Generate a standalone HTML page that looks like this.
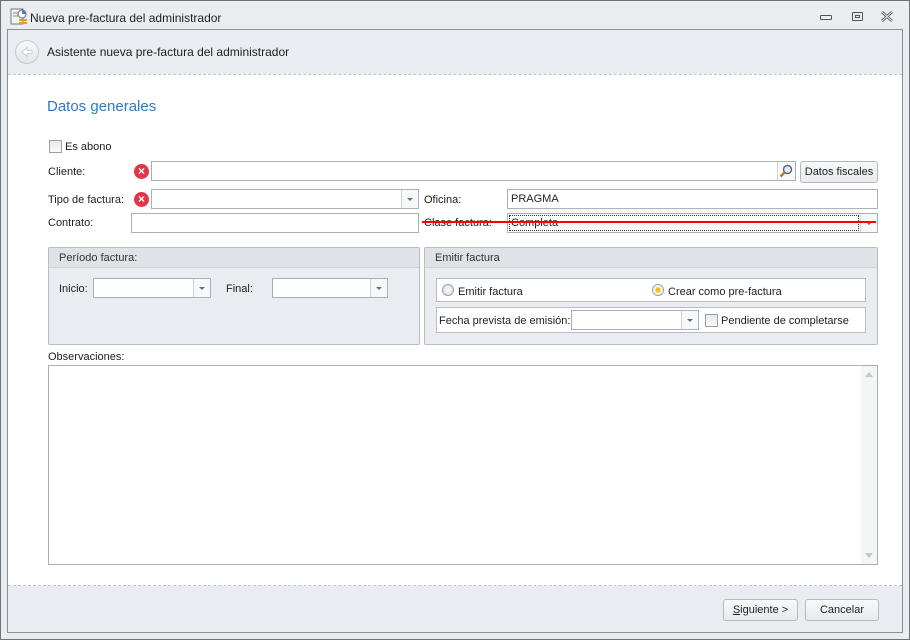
<!DOCTYPE html>
<html><head><meta charset="utf-8">
<style>
*{box-sizing:border-box;margin:0;padding:0}
body{width:910px;height:640px;position:relative;overflow:hidden;font-family:"Liberation Sans",sans-serif;font-size:11px;color:#1e1e1e;background:#e9ecf0}
.a{position:absolute}
.t{position:absolute;white-space:nowrap;font-size:11px;line-height:15px;margin-top:1px}
.box{position:absolute;background:#fff;border:1px solid #abb0b8}
.dd{position:absolute;top:0;right:0;width:17px;height:100%;border-left:1px solid #d0d3d8;background:#f7f8fa}
.dd:after{content:"";position:absolute;left:5px;top:8px;border-left:3px solid transparent;border-right:3px solid transparent;border-top:3px solid #707070}
.err{position:absolute;width:15px;height:15px;border-radius:50%;background:#e2344a;color:#fff;font-size:12px;font-weight:bold;line-height:15px;text-align:center}
.btn{position:absolute;border:1px solid #b4b8bf;border-radius:3px;background:linear-gradient(#f8f9fa,#e8eaed);text-align:center;line-height:21px}
.grp{position:absolute;background:#e9ecf0;border:1px solid #b8bcc3;border-radius:2px}
.gh{height:20px;border-bottom:1px solid #cfd3d8;background:#dfe2e7;padding-left:10px;line-height:20px;color:#333}
.chk{position:absolute;width:13px;height:13px;border:1px solid #9aa0a8;background:linear-gradient(#e6e8eb,#fafafa)}
</style></head><body>
<div class="a" style="left:0;top:0;width:910px;height:640px;border:1px solid #6d737b;background:#eaedf0"></div>
<svg class="a" style="left:10px;top:8px" width="18" height="18" viewBox="0 0 18 18"><rect x="1" y="1" width="12" height="15" fill="#f4f4f4" stroke="#777"/><line x1="3" y1="5" x2="8" y2="5" stroke="#888"/><line x1="3" y1="8" x2="8" y2="8" stroke="#888"/><circle cx="12" cy="6" r="4" fill="#ffffff" stroke="#666"/><path d="M12 6V2.5A3.5 3.5 0 0 1 15.5 6Z" fill="#4a7bc8"/><rect x="9" y="11" width="8" height="2" fill="#e0a020"/><rect x="9" y="14" width="8" height="2" fill="#e0a020"/></svg>
<div class="t" style="left:30px;top:10px;font-size:12px">Nueva pre-factura del administrador</div>
<div class="a" style="left:820px;top:15px;width:12px;height:5px;border:1px solid #555;border-radius:1px"></div>
<div class="a" style="left:852px;top:12px;width:11px;height:9px;border:1px solid #555;border-radius:1px"><div style="margin:2px auto 0;width:5px;height:3px;border:1px solid #555"></div></div>
<svg class="a" style="left:881px;top:11px" width="12" height="11" viewBox="0 0 12 11"><path d="M1 1L11 10M11 1L1 10" stroke="#555" stroke-width="2.6"/><path d="M1 1L11 10M11 1L1 10" stroke="#eaedf0" stroke-width="1"/></svg>
<div class="a" style="left:7px;top:29px;width:896px;height:604px;border:1px solid #8a9098;background:#e9ecf0"></div>
<div class="a" style="left:8px;top:74px;width:894px;height:512px;background:#fff;border-top:1px dashed #c0c4ca;border-bottom:1px dashed #c0c4ca"></div>
<div class="a" style="left:15px;top:40px;width:24px;height:24px;border-radius:50%;border:1px solid #c7cbd1;background:linear-gradient(#f7f8fa,#e2e5e9)"></div>
<svg class="a" style="left:19px;top:44px" width="16" height="16" viewBox="0 0 16 16"><path d="M3 8L8 3.5V6.5H13V9.5H8V12.5Z" fill="#fff" stroke="#cdd1d6"/></svg>
<div class="t" style="left:47px;top:44px;font-size:12px">Asistente nueva pre-factura del administrador</div>
<div class="t" style="left:47px;top:97px;font-size:15px;line-height:18px;color:#2b7bc4">Datos generales</div>
<div class="chk" style="left:49px;top:140px"></div>
<div class="t" style="left:65px;top:139px">Es abono</div>
<div class="t" style="left:48px;top:164px">Cliente:</div>
<div class="err" style="left:134px;top:164px">×</div>
<div class="box" style="left:151px;top:161px;width:645px;height:20px"><div class="a" style="right:0;top:0;width:18px;height:18px;border-left:1px solid #d0d3d8;background:#f7f8fa"></div>
<svg class="a" style="right:2px;top:2px" width="14" height="14" viewBox="0 0 14 14"><circle cx="8.5" cy="5.5" r="4" fill="#dfeaf5" stroke="#5a6470" stroke-width="1.4"/><line x1="5.5" y1="8.5" x2="1.5" y2="12.5" stroke="#b07830" stroke-width="2.4"/></svg></div>
<div class="btn" style="left:800px;top:161px;width:78px;height:22px">Datos fiscales</div>
<div class="t" style="left:48px;top:192px">Tipo de factura:</div>
<div class="err" style="left:134px;top:192px">×</div>
<div class="box" style="left:151px;top:189px;width:268px;height:20px"><div class="dd"></div></div>
<div class="t" style="left:424px;top:192px">Oficina:</div>
<div class="box" style="left:507px;top:189px;width:371px;height:20px"><div class="t" style="left:3px;top:1px">PRAGMA</div></div>
<div class="t" style="left:48px;top:215px">Contrato:</div>
<div class="box" style="left:131px;top:213px;width:288px;height:20px"></div>
<div class="t" style="left:424px;top:215px">Clase factura:</div>
<div class="box" style="left:507px;top:213px;width:371px;height:20px"><div class="a" style="left:1px;top:1px;right:18px;bottom:1px;border:1px dotted #333"></div><div class="t" style="left:3px;top:1px">Completa</div><div class="dd"></div></div>
<div class="a" style="left:422px;top:221px;width:454px;height:2px;background:#f00"></div>
<div class="grp" style="left:48px;top:247px;width:372px;height:98px"><div class="gh">Período factura:</div></div>
<div class="t" style="left:59px;top:281px">Inicio:</div>
<div class="box" style="left:93px;top:278px;width:118px;height:20px"><div class="dd"></div></div>
<div class="t" style="left:226px;top:281px">Final:</div>
<div class="box" style="left:272px;top:278px;width:116px;height:20px"><div class="dd"></div></div>
<div class="grp" style="left:424px;top:247px;width:454px;height:98px"><div class="gh">Emitir factura</div></div>
<div class="a" style="left:436px;top:278px;width:430px;height:24px;background:#fff;border:1px solid #b8bcc3"></div>
<div class="a" style="left:442px;top:284px;width:12px;height:12px;border-radius:50%;border:1px solid #9aa0a8;background:radial-gradient(#fafafa,#d8dbe0)"></div>
<div class="t" style="left:458px;top:284px">Emitir factura</div>
<div class="a" style="left:652px;top:284px;width:12px;height:12px;border-radius:50%;border:1px solid #9aa0a8;background:radial-gradient(#f7c21a 35%,#fff 45%,#e0e2e6)"></div>
<div class="t" style="left:668px;top:284px">Crear como pre-factura</div>
<div class="a" style="left:436px;top:307px;width:430px;height:26px;background:#fff;border:1px solid #b8bcc3"></div>
<div class="t" style="left:439px;top:313px">Fecha prevista de emisión:</div>
<div class="box" style="left:571px;top:310px;width:128px;height:20px"><div class="dd"></div></div>
<div class="chk" style="left:705px;top:314px"></div>
<div class="t" style="left:721px;top:313px">Pendiente de completarse</div>
<div class="t" style="left:48px;top:349px">Observaciones:</div>
<div class="box" style="left:48px;top:365px;width:830px;height:200px"><div class="a" style="right:0;top:0;width:16px;height:100%;background:#f4f5f7"></div>
<div class="a" style="right:4px;top:6px;border-left:4px solid transparent;border-right:4px solid transparent;border-bottom:5px solid #c4c7cc"></div>
<div class="a" style="right:4px;bottom:6px;border-left:4px solid transparent;border-right:4px solid transparent;border-top:5px solid #c4c7cc"></div></div>
<div class="btn" style="left:723px;top:599px;width:75px;height:22px"><u>S</u>iguiente &gt;</div>
<div class="btn" style="left:805px;top:599px;width:74px;height:22px">Cancelar</div>
</body></html>
